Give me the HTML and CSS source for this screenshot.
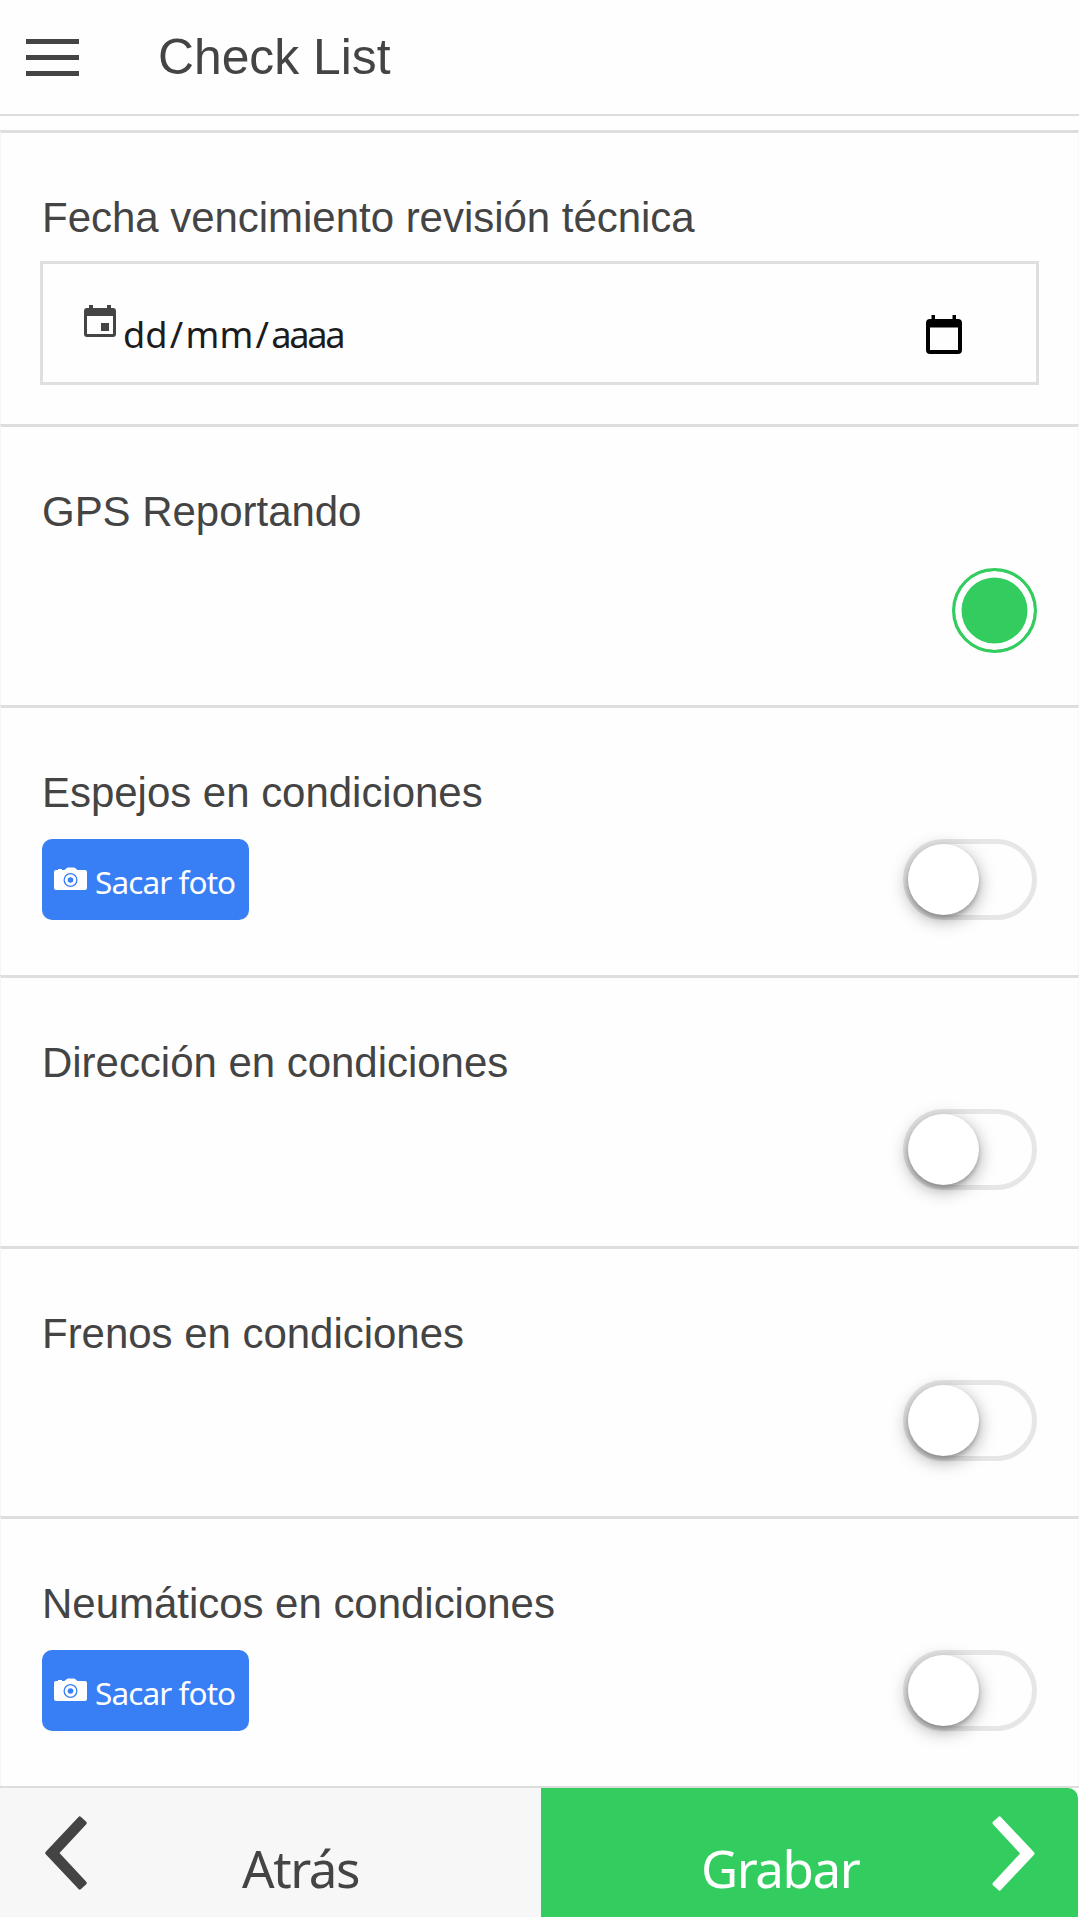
FILE: index.html
```html
<!DOCTYPE html>
<html lang="es">
<head>
<meta charset="utf-8">
<title>Check List</title>
<link rel="stylesheet" href="styles.css">
</head>
<body>
<svg width="0" height="0" class="defs">
  <symbol id="camera" viewBox="0 0 33 24">
    <path fill="#fff" fill-rule="evenodd" d="M2 3H4V2H8V3H10C12 3 12 .5 14 .5H20C22 .5 22 3 24 3H31Q33 3 33 5V21Q33 23 31 23H2Q0 23 0 21V5Q0 3 2 3ZM16.5 6A7 7 0 1 0 16.5 20A7 7 0 1 0 16.5 6ZM16.5 7.3A5.7 5.7 0 1 1 16.5 18.7A5.7 5.7 0 1 1 16.5 7.3Z"/>
    <circle cx="16.5" cy="13" r="2.8" fill="#387ef5"/>
  </symbol>
</svg>
<header class="header">
  <svg class="menu" width="53" height="37" viewBox="0 0 53 37"><path fill="#444" d="M0 0H53V5H0ZM0 16H53V21H0ZM0 32H53V37H0Z"/></svg>
  <h1 class="title">Check List</h1>
</header>
<main class="list">
  <section class="item item-date">
    <h2 class="label">Fecha vencimiento revisión técnica</h2>
    <div class="date">
      <svg class="date-icon" width="32" height="32" viewBox="0 0 32 32"><path fill="#444" fill-rule="evenodd" d="M5 0H9V3H23V0H27V3H29Q32 3 32 6V29Q32 32 29 32H3Q0 32 0 29V6Q0 3 3 3H5ZM3 11V29H29V11ZM17 18H25V26H17Z"/></svg>
      <span class="date-text">dd<span class="slash">/</span>mm<span class="slash">/</span><span class="year">aaaa</span></span>
      <svg class="picker" width="36" height="39" viewBox="0 0 36 39"><path fill="#000" fill-rule="evenodd" d="M5.5 0H9V4H26.500V0H30V4H32Q36 4 36 8V35Q36 39 32 39H4Q0 39 0 35V8Q0 4 4 4H5.500ZM4 12.500V35H32V12.500Z"/></svg>
    </div>
  </section>
  <section class="item item-gps">
    <h2 class="label">GPS Reportando</h2>
    <div class="controls"><span class="radio"></span></div>
  </section>
  <section class="item">
    <h2 class="label">Espejos en condiciones</h2>
    <div class="controls">
      <button class="photo"><svg class="camera" width="33" height="24"><use href="#camera"/></svg><span class="photo-text">Sacar foto</span></button>
      <span class="toggle"><span class="knob"></span></span>
    </div>
  </section>
  <section class="item">
    <h2 class="label">Dirección en condiciones</h2>
    <div class="controls"><span class="toggle"><span class="knob"></span></span></div>
  </section>
  <section class="item">
    <h2 class="label">Frenos en condiciones</h2>
    <div class="controls"><span class="toggle"><span class="knob"></span></span></div>
  </section>
  <section class="item">
    <h2 class="label">Neumáticos en condiciones</h2>
    <div class="controls">
      <button class="photo"><svg class="camera" width="33" height="24"><use href="#camera"/></svg><span class="photo-text">Sacar foto</span></button>
      <span class="toggle"><span class="knob"></span></span>
    </div>
  </section>
</main>
<footer class="footer">
  <button class="nav back">
    <svg width="42" height="74" viewBox="0 0 42 74"><path fill="#444" d="M34 .5Q35 0 36 1L41.500 6Q42 7 41.500 8L14.500 37L41.500 66Q42 67 41.500 68L36 73Q35 74 34 73.500L.5 38Q0 37 .5 36Z"/></svg>
    <span class="nav-text">Atrás</span>
  </button>
  <button class="nav save">
    <span class="nav-text">Grabar</span>
    <svg width="43" height="75" viewBox="0 0 42 74"><path fill="#fff" d="M8 .5Q7 0 6 1L.5 6Q0 7 .5 8L27.500 37L.5 66Q0 67 .5 68L6 73Q7 74 8 73.500L41.500 38Q42 37 41.500 36Z"/></svg>
  </button>
</footer>
</body>
</html>
```
FILE: styles.css
```css
* { box-sizing: border-box; }
body {
  margin: 0;
  width: 1079px;
  height: 1919px;
  overflow: hidden;
  display: flex;
  flex-direction: column;
  background: #fefefe;
  color: #444;
  font-family: "Liberation Sans", Arial, sans-serif;
}
.defs { display: none; }
h1, h2 { margin: 0; font-weight: 400; }
button { border: 0; margin: 0; font: inherit; }

.header {
  height: 116px;
  flex: none;
  display: flex;
  align-items: center;
  padding-left: 26px;
  border-bottom: 2px solid #ddd;
}
.menu { margin-top: 1px; }
.title { margin-left: 79px; font-size: 49.8px; line-height: 113px; }

.list {
  flex: none;
  padding-top: 14px;
  display: grid;
  grid-template-rows: 294px 281px 270px 271px 270px 270px;
}
.item { border-top: 3px solid #dedede; border-left: 1px solid #f5f5f5; border-right: 1px solid #f8f8f8; padding: 60px 41px 0 41px; }
.label { font-size: 42px; line-height: 50px; letter-spacing: -0.03px; white-space: nowrap; }

.date {
  height: 124px;
  margin: 18px -2px 0;
  padding: 0 74px 0 41px;
  border: 3px solid #dfdfdf;
  display: flex;
  align-items: flex-start;
}
.date-icon { margin-top: 41px; }
.date-text {
  margin: 45px 0 0 7px;
  flex: 1;
  color: #1c1c1c;
  font: 36.2px/50px "Noto Sans", sans-serif;
}
.slash { padding: 0 2.3px; }
.year { letter-spacing: -2.3px; }
.picker { margin-top: 51px; }

.controls { display: flex; align-items: flex-start; padding-top: 21px; }
.item-gps .controls { padding-top: 31px; }
.radio {
  width: 85px;
  height: 85px;
  margin-left: auto;
  border: 3px solid #33cd5f;
  border-radius: 50%;
  background: #33cd5f;
  box-shadow: inset 0 0 0 6.500px #fff;
}
.photo {
  width: 207px;
  height: 81px;
  padding: 0 0 0 12px;
  display: flex;
  align-items: center;
  border-radius: 10px;
  background: #387ef5;
  color: #fff;
}
.camera { flex: none; margin-top: -2px; }
.photo-text {
  margin: 5px 0 0 8px;
  font: 31.5px/50px "Noto Sans", sans-serif;
  letter-spacing: -0.9px;
  white-space: nowrap;
}
.toggle {
  width: 134px;
  height: 81px;
  margin-left: auto;
  border: 5px solid #e6e6e6;
  border-radius: 41px;
}
.knob {
  display: block;
  width: 71px;
  height: 71px;
  border-radius: 50%;
  background: #fff;
  box-shadow: 0 5px 18px rgba(0, 0, 0, .36), 0 3px 4px rgba(0, 0, 0, .2);
}

.footer {
  height: 131px;
  flex: none;
  display: flex;
  padding: 0 1px 0 0;
  border-top: 2px solid #ddd;
}
.nav {
  height: 129px;
  display: flex;
  align-items: flex-start;
  padding-top: 28px;
  color: #444;
}
.nav svg { flex: none; }
.nav-text {
  margin-top: 15px;
  font: 51px/74px "Noto Sans", sans-serif;
  letter-spacing: -1.4px;
}
.back { width: 541px; padding-left: 45px; background: #f7f7f7; }
.back .nav-text { margin-left: 155px; }
.save {
  width: 537px;
  padding-left: 160px;
  padding-right: 43px;
  justify-content: space-between;
  border-radius: 0 10px 0 0;
  background: #33cd5f;
  color: #fff;
}
```
